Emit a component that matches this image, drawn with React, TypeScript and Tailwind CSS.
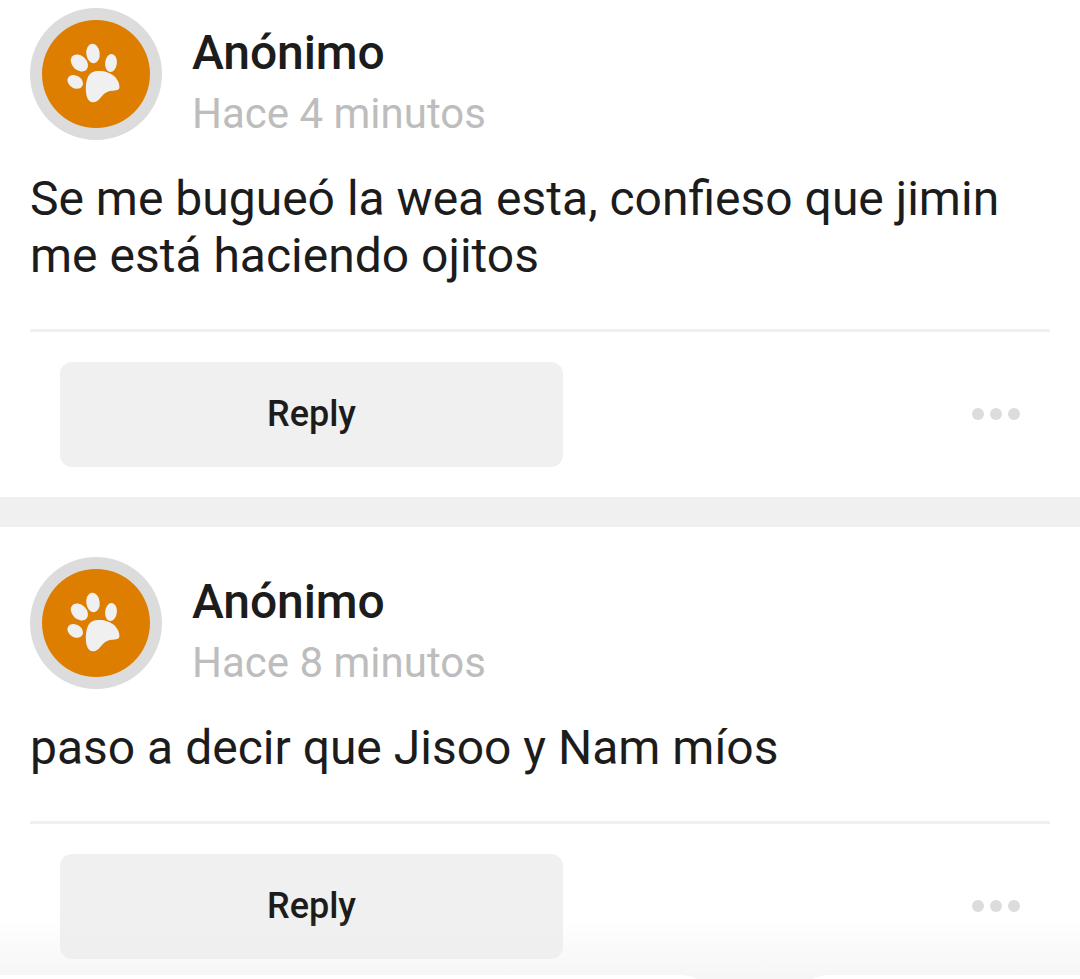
// Anonymous confession feed: stacked post cards with a reply action each.

type Post = {
  id: number;
  author: string;
  time: string;
  text: string;
};

const POSTS: Post[] = [
  {
    id: 1,
    author: "Anónimo",
    time: "Hace 4 minutos",
    text: "Se me bugueó la wea esta, confieso que jimin me está haciendo ojitos",
  },
  {
    id: 2,
    author: "Anónimo",
    time: "Hace 8 minutos",
    text: "paso a decir que Jisoo y Nam míos",
  },
];

export default function App() {
  return (
    <div className="relative h-[979px] w-[1080px] overflow-hidden bg-white font-['Roboto',sans-serif] text-[#1c1c1c]">
      {/* feed is scrolled a little past the first card's top padding */}
      <div className="-mt-[22px] flex flex-col gap-[30px] bg-[#f0f0f0]">
        {POSTS.map((post) => (
          <PostCard key={post.id} post={post} />
        ))}
      </div>
      <BottomBar />
    </div>
  );
}

function PostCard({ post }: { post: Post }) {
  return (
    <article className="bg-white px-[30px] pt-[30px] pb-[30px]">
      <header className="flex gap-[30px]">
        <Avatar />
        <div className="flex flex-col pt-[17px]">
          <span className="text-[48px] leading-[56px] font-medium tracking-[-0.1px]">
            {post.author}
          </span>
          <span className="mt-[8px] text-[42px] leading-[50px] text-[#bdbdbd]">
            {post.time}
          </span>
        </div>
      </header>
      <p className="mt-[30px] text-[48px] leading-[57px]">{post.text}</p>
      <div className="mt-[45px] h-[3px] bg-[#f0f0f0]" />
      <footer className="mt-[30px] flex items-center justify-between px-[30px]">
        <button className="h-[105px] w-[503px] rounded-[12px] bg-[#f0f0f0] pb-[2px] text-[36px] font-medium">
          Reply
        </button>
        <button aria-label="Más opciones" className="flex gap-[6px] pb-[2px]">
          <span className="size-[12px] rounded-full bg-[#dcdcdc]" />
          <span className="size-[12px] rounded-full bg-[#dcdcdc]" />
          <span className="size-[12px] rounded-full bg-[#dcdcdc]" />
        </button>
      </footer>
    </article>
  );
}

function Avatar() {
  return (
    <div className="size-[132px] shrink-0 rounded-full bg-[#dcdcdc] p-[12px]">
      <div className="size-[108px] rounded-full bg-[#de7e00]">
        <PawMark />
      </div>
    </div>
  );
}

function PawMark() {
  return (
    <svg width="108" height="108" viewBox="0 0 108 108" fill="#f0f0f0" aria-hidden="true">
      <ellipse cx="51" cy="33.5" rx="6.7" ry="9.8" transform="rotate(-7 51 33.5)" />
      <ellipse cx="37.4" cy="43" rx="7.2" ry="9.8" transform="rotate(-46 37.4 43)" />
      <ellipse cx="33.2" cy="61.8" rx="6.3" ry="8.3" transform="rotate(-58 33.2 61.8)" />
      <ellipse cx="69" cy="43" rx="5.9" ry="9.1" transform="rotate(6 69 43)" />
      <path d="M55.5 51C62 50.6 68.5 52.6 72.6 56.6C75.8 59.8 77.8 64.5 77.4 67.5C77 70.4 74 70.4 70 70.8C64.5 71.4 61.5 74 58.5 77.8C56 80.8 54 82.5 50.6 82.3C46.5 82 44.2 77.5 43.9 71C43.7 64 44.5 58.5 47.5 54.5C49.5 52 52 51.2 55.5 51Z" />
    </svg>
  );
}

// Soft shade above the tab bar, with the notch that holds the floating button.
function BottomBar() {
  return (
    <div className="absolute inset-x-0 bottom-0 h-[61px] bg-linear-to-b from-[#ececec]/0 to-[#ececec]/50">
      <svg
        className="absolute bottom-0 left-0"
        width="1080"
        height="4"
        viewBox="0 0 1080 4"
        fill="#ffffff"
        aria-hidden="true"
      >
        <path d="M0 0H680Q690 0 697 4H0Z" />
        <path d="M1080 0H830Q820 0 812 4H1080Z" />
      </svg>
    </div>
  );
}
